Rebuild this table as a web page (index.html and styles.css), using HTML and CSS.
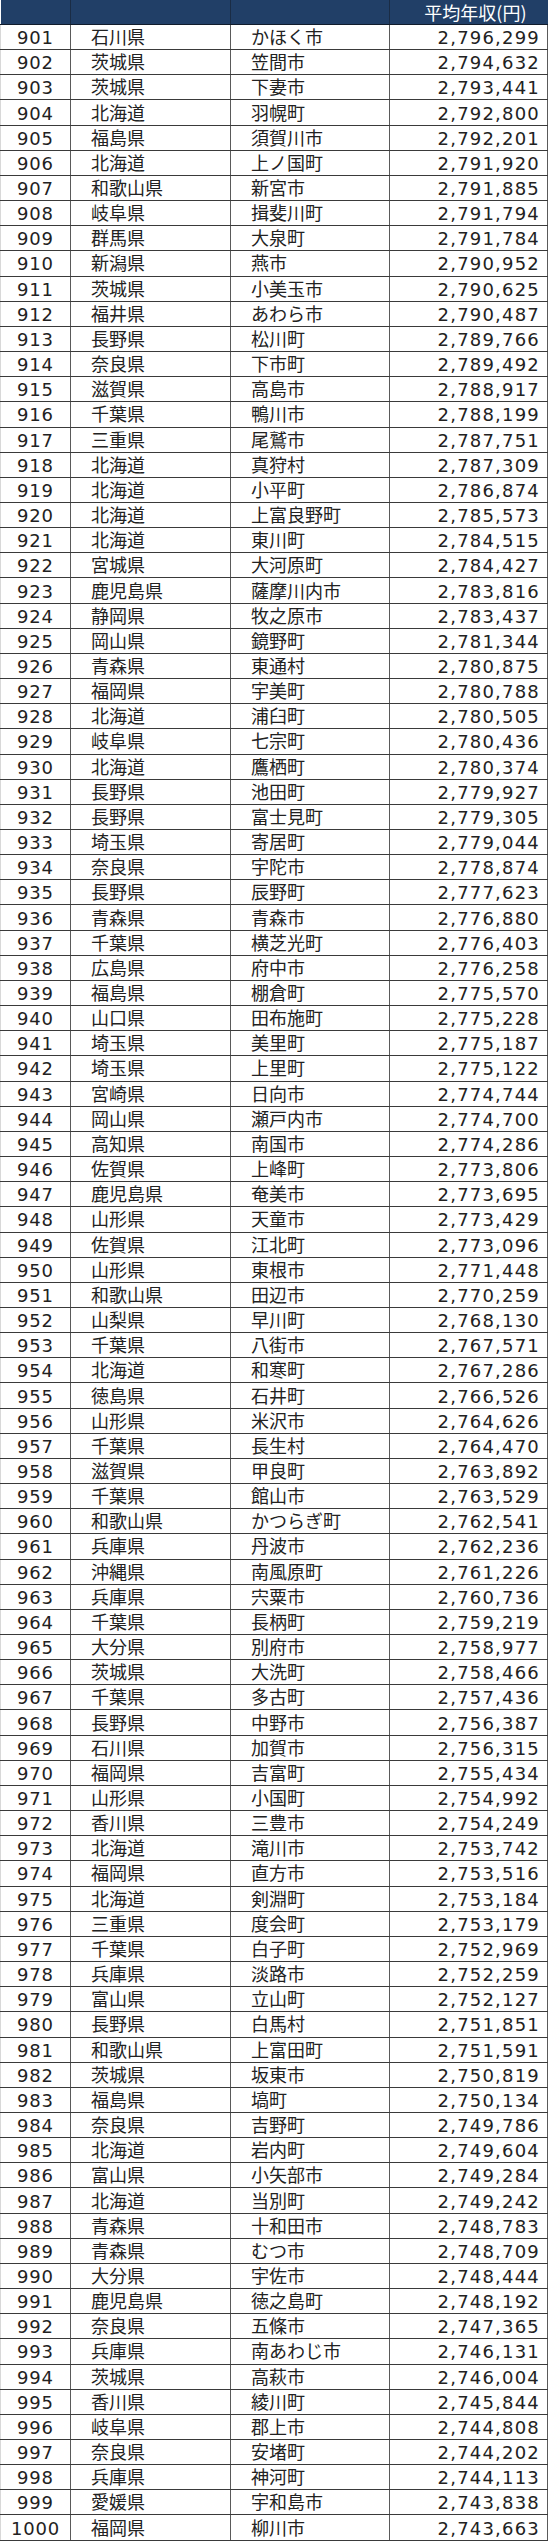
FILE: index.html
```html
<!DOCTYPE html>
<html lang="ja">
<head>
<meta charset="utf-8">
<title>平均年収ランキング 901-1000</title>
<link rel="stylesheet" href="styles.css">
</head>
<body>
<table class="rank">
<colgroup><col class="c-rank"><col class="c-pref"><col class="c-city"><col class="c-val"></colgroup>
<thead><tr><th></th><th></th><th></th><th class="val">平均年収(円)</th></tr></thead>
<tbody id="rows">
<tr><td class="num">901</td><td>石川県</td><td>かほく市</td><td class="val">2,796,299</td></tr>
<tr><td class="num">902</td><td>茨城県</td><td>笠間市</td><td class="val">2,794,632</td></tr>
<tr><td class="num">903</td><td>茨城県</td><td>下妻市</td><td class="val">2,793,441</td></tr>
<tr><td class="num">904</td><td>北海道</td><td>羽幌町</td><td class="val">2,792,800</td></tr>
<tr><td class="num">905</td><td>福島県</td><td>須賀川市</td><td class="val">2,792,201</td></tr>
<tr><td class="num">906</td><td>北海道</td><td>上ノ国町</td><td class="val">2,791,920</td></tr>
<tr><td class="num">907</td><td>和歌山県</td><td>新宮市</td><td class="val">2,791,885</td></tr>
<tr><td class="num">908</td><td>岐阜県</td><td>揖斐川町</td><td class="val">2,791,794</td></tr>
<tr><td class="num">909</td><td>群馬県</td><td>大泉町</td><td class="val">2,791,784</td></tr>
<tr><td class="num">910</td><td>新潟県</td><td>燕市</td><td class="val">2,790,952</td></tr>
<tr><td class="num">911</td><td>茨城県</td><td>小美玉市</td><td class="val">2,790,625</td></tr>
<tr><td class="num">912</td><td>福井県</td><td>あわら市</td><td class="val">2,790,487</td></tr>
<tr><td class="num">913</td><td>長野県</td><td>松川町</td><td class="val">2,789,766</td></tr>
<tr><td class="num">914</td><td>奈良県</td><td>下市町</td><td class="val">2,789,492</td></tr>
<tr><td class="num">915</td><td>滋賀県</td><td>高島市</td><td class="val">2,788,917</td></tr>
<tr><td class="num">916</td><td>千葉県</td><td>鴨川市</td><td class="val">2,788,199</td></tr>
<tr><td class="num">917</td><td>三重県</td><td>尾鷲市</td><td class="val">2,787,751</td></tr>
<tr><td class="num">918</td><td>北海道</td><td>真狩村</td><td class="val">2,787,309</td></tr>
<tr><td class="num">919</td><td>北海道</td><td>小平町</td><td class="val">2,786,874</td></tr>
<tr><td class="num">920</td><td>北海道</td><td>上富良野町</td><td class="val">2,785,573</td></tr>
<tr><td class="num">921</td><td>北海道</td><td>東川町</td><td class="val">2,784,515</td></tr>
<tr><td class="num">922</td><td>宮城県</td><td>大河原町</td><td class="val">2,784,427</td></tr>
<tr><td class="num">923</td><td>鹿児島県</td><td>薩摩川内市</td><td class="val">2,783,816</td></tr>
<tr><td class="num">924</td><td>静岡県</td><td>牧之原市</td><td class="val">2,783,437</td></tr>
<tr><td class="num">925</td><td>岡山県</td><td>鏡野町</td><td class="val">2,781,344</td></tr>
<tr><td class="num">926</td><td>青森県</td><td>東通村</td><td class="val">2,780,875</td></tr>
<tr><td class="num">927</td><td>福岡県</td><td>宇美町</td><td class="val">2,780,788</td></tr>
<tr><td class="num">928</td><td>北海道</td><td>浦臼町</td><td class="val">2,780,505</td></tr>
<tr><td class="num">929</td><td>岐阜県</td><td>七宗町</td><td class="val">2,780,436</td></tr>
<tr><td class="num">930</td><td>北海道</td><td>鷹栖町</td><td class="val">2,780,374</td></tr>
<tr><td class="num">931</td><td>長野県</td><td>池田町</td><td class="val">2,779,927</td></tr>
<tr><td class="num">932</td><td>長野県</td><td>富士見町</td><td class="val">2,779,305</td></tr>
<tr><td class="num">933</td><td>埼玉県</td><td>寄居町</td><td class="val">2,779,044</td></tr>
<tr><td class="num">934</td><td>奈良県</td><td>宇陀市</td><td class="val">2,778,874</td></tr>
<tr><td class="num">935</td><td>長野県</td><td>辰野町</td><td class="val">2,777,623</td></tr>
<tr><td class="num">936</td><td>青森県</td><td>青森市</td><td class="val">2,776,880</td></tr>
<tr><td class="num">937</td><td>千葉県</td><td>横芝光町</td><td class="val">2,776,403</td></tr>
<tr><td class="num">938</td><td>広島県</td><td>府中市</td><td class="val">2,776,258</td></tr>
<tr><td class="num">939</td><td>福島県</td><td>棚倉町</td><td class="val">2,775,570</td></tr>
<tr><td class="num">940</td><td>山口県</td><td>田布施町</td><td class="val">2,775,228</td></tr>
<tr><td class="num">941</td><td>埼玉県</td><td>美里町</td><td class="val">2,775,187</td></tr>
<tr><td class="num">942</td><td>埼玉県</td><td>上里町</td><td class="val">2,775,122</td></tr>
<tr><td class="num">943</td><td>宮崎県</td><td>日向市</td><td class="val">2,774,744</td></tr>
<tr><td class="num">944</td><td>岡山県</td><td>瀬戸内市</td><td class="val">2,774,700</td></tr>
<tr><td class="num">945</td><td>高知県</td><td>南国市</td><td class="val">2,774,286</td></tr>
<tr><td class="num">946</td><td>佐賀県</td><td>上峰町</td><td class="val">2,773,806</td></tr>
<tr><td class="num">947</td><td>鹿児島県</td><td>奄美市</td><td class="val">2,773,695</td></tr>
<tr><td class="num">948</td><td>山形県</td><td>天童市</td><td class="val">2,773,429</td></tr>
<tr><td class="num">949</td><td>佐賀県</td><td>江北町</td><td class="val">2,773,096</td></tr>
<tr><td class="num">950</td><td>山形県</td><td>東根市</td><td class="val">2,771,448</td></tr>
<tr><td class="num">951</td><td>和歌山県</td><td>田辺市</td><td class="val">2,770,259</td></tr>
<tr><td class="num">952</td><td>山梨県</td><td>早川町</td><td class="val">2,768,130</td></tr>
<tr><td class="num">953</td><td>千葉県</td><td>八街市</td><td class="val">2,767,571</td></tr>
<tr><td class="num">954</td><td>北海道</td><td>和寒町</td><td class="val">2,767,286</td></tr>
<tr><td class="num">955</td><td>徳島県</td><td>石井町</td><td class="val">2,766,526</td></tr>
<tr><td class="num">956</td><td>山形県</td><td>米沢市</td><td class="val">2,764,626</td></tr>
<tr><td class="num">957</td><td>千葉県</td><td>長生村</td><td class="val">2,764,470</td></tr>
<tr><td class="num">958</td><td>滋賀県</td><td>甲良町</td><td class="val">2,763,892</td></tr>
<tr><td class="num">959</td><td>千葉県</td><td>館山市</td><td class="val">2,763,529</td></tr>
<tr><td class="num">960</td><td>和歌山県</td><td>かつらぎ町</td><td class="val">2,762,541</td></tr>
<tr><td class="num">961</td><td>兵庫県</td><td>丹波市</td><td class="val">2,762,236</td></tr>
<tr><td class="num">962</td><td>沖縄県</td><td>南風原町</td><td class="val">2,761,226</td></tr>
<tr><td class="num">963</td><td>兵庫県</td><td>宍粟市</td><td class="val">2,760,736</td></tr>
<tr><td class="num">964</td><td>千葉県</td><td>長柄町</td><td class="val">2,759,219</td></tr>
<tr><td class="num">965</td><td>大分県</td><td>別府市</td><td class="val">2,758,977</td></tr>
<tr><td class="num">966</td><td>茨城県</td><td>大洗町</td><td class="val">2,758,466</td></tr>
<tr><td class="num">967</td><td>千葉県</td><td>多古町</td><td class="val">2,757,436</td></tr>
<tr><td class="num">968</td><td>長野県</td><td>中野市</td><td class="val">2,756,387</td></tr>
<tr><td class="num">969</td><td>石川県</td><td>加賀市</td><td class="val">2,756,315</td></tr>
<tr><td class="num">970</td><td>福岡県</td><td>吉富町</td><td class="val">2,755,434</td></tr>
<tr><td class="num">971</td><td>山形県</td><td>小国町</td><td class="val">2,754,992</td></tr>
<tr><td class="num">972</td><td>香川県</td><td>三豊市</td><td class="val">2,754,249</td></tr>
<tr><td class="num">973</td><td>北海道</td><td>滝川市</td><td class="val">2,753,742</td></tr>
<tr><td class="num">974</td><td>福岡県</td><td>直方市</td><td class="val">2,753,516</td></tr>
<tr><td class="num">975</td><td>北海道</td><td>剣淵町</td><td class="val">2,753,184</td></tr>
<tr><td class="num">976</td><td>三重県</td><td>度会町</td><td class="val">2,753,179</td></tr>
<tr><td class="num">977</td><td>千葉県</td><td>白子町</td><td class="val">2,752,969</td></tr>
<tr><td class="num">978</td><td>兵庫県</td><td>淡路市</td><td class="val">2,752,259</td></tr>
<tr><td class="num">979</td><td>富山県</td><td>立山町</td><td class="val">2,752,127</td></tr>
<tr><td class="num">980</td><td>長野県</td><td>白馬村</td><td class="val">2,751,851</td></tr>
<tr><td class="num">981</td><td>和歌山県</td><td>上富田町</td><td class="val">2,751,591</td></tr>
<tr><td class="num">982</td><td>茨城県</td><td>坂東市</td><td class="val">2,750,819</td></tr>
<tr><td class="num">983</td><td>福島県</td><td>塙町</td><td class="val">2,750,134</td></tr>
<tr><td class="num">984</td><td>奈良県</td><td>吉野町</td><td class="val">2,749,786</td></tr>
<tr><td class="num">985</td><td>北海道</td><td>岩内町</td><td class="val">2,749,604</td></tr>
<tr><td class="num">986</td><td>富山県</td><td>小矢部市</td><td class="val">2,749,284</td></tr>
<tr><td class="num">987</td><td>北海道</td><td>当別町</td><td class="val">2,749,242</td></tr>
<tr><td class="num">988</td><td>青森県</td><td>十和田市</td><td class="val">2,748,783</td></tr>
<tr><td class="num">989</td><td>青森県</td><td>むつ市</td><td class="val">2,748,709</td></tr>
<tr><td class="num">990</td><td>大分県</td><td>宇佐市</td><td class="val">2,748,444</td></tr>
<tr><td class="num">991</td><td>鹿児島県</td><td>徳之島町</td><td class="val">2,748,192</td></tr>
<tr><td class="num">992</td><td>奈良県</td><td>五條市</td><td class="val">2,747,365</td></tr>
<tr><td class="num">993</td><td>兵庫県</td><td>南あわじ市</td><td class="val">2,746,131</td></tr>
<tr><td class="num">994</td><td>茨城県</td><td>高萩市</td><td class="val">2,746,004</td></tr>
<tr><td class="num">995</td><td>香川県</td><td>綾川町</td><td class="val">2,745,844</td></tr>
<tr><td class="num">996</td><td>岐阜県</td><td>郡上市</td><td class="val">2,744,808</td></tr>
<tr><td class="num">997</td><td>奈良県</td><td>安堵町</td><td class="val">2,744,202</td></tr>
<tr><td class="num">998</td><td>兵庫県</td><td>神河町</td><td class="val">2,744,113</td></tr>
<tr><td class="num">999</td><td>愛媛県</td><td>宇和島市</td><td class="val">2,743,838</td></tr>
<tr><td class="num">1000</td><td>福岡県</td><td>柳川市</td><td class="val">2,743,663</td></tr>
</tbody>
</table>
</body>
</html>
```
FILE: styles.css
```css
html, body {
  margin: 0;
  padding: 0;
  background: #ffffff;
}

.rank {
  width: 547px;
  border-collapse: collapse;
  table-layout: fixed;
  font-family: "DejaVu Sans", "Noto Sans CJK JP", sans-serif;
  font-size: 18px;
  color: #222222;
}

.c-rank { width: 70px; }
.c-pref { width: 160px; }
.c-city { width: 159px; }
.c-val  { width: 158px; }

.rank th {
  height: 24px;
  padding: 0 21px 0 0;
  background: #213f67;
  color: #ffffff;
  font-family: "Noto Sans CJK JP", sans-serif;
  font-weight: normal;
  line-height: 24px;
  border-left: 1px solid #1a2c45;
  border-bottom: 1px solid #111c2c;
}

.rank th:first-child { border-left: none; }

.rank td {
  height: 25.16px;
  padding: 2px 0 0 20px;
  line-height: 22px;
  border: 1px solid #5a5a5a;
  border-top-color: #3a3a3a;
  border-bottom-color: #3a3a3a;
  white-space: nowrap;
  overflow: hidden;
  box-sizing: border-box;
}

.rank td:first-child { border-left-color: #d8d8d8; }

.rank td.num {
  padding-left: 0;
  text-align: center;
  letter-spacing: 0.8px;
}

.rank td.val {
  padding-left: 0;
  padding-right: 7px;
  text-align: right;
  letter-spacing: 1.2px;
}

.rank th.val { text-align: right; }
```
